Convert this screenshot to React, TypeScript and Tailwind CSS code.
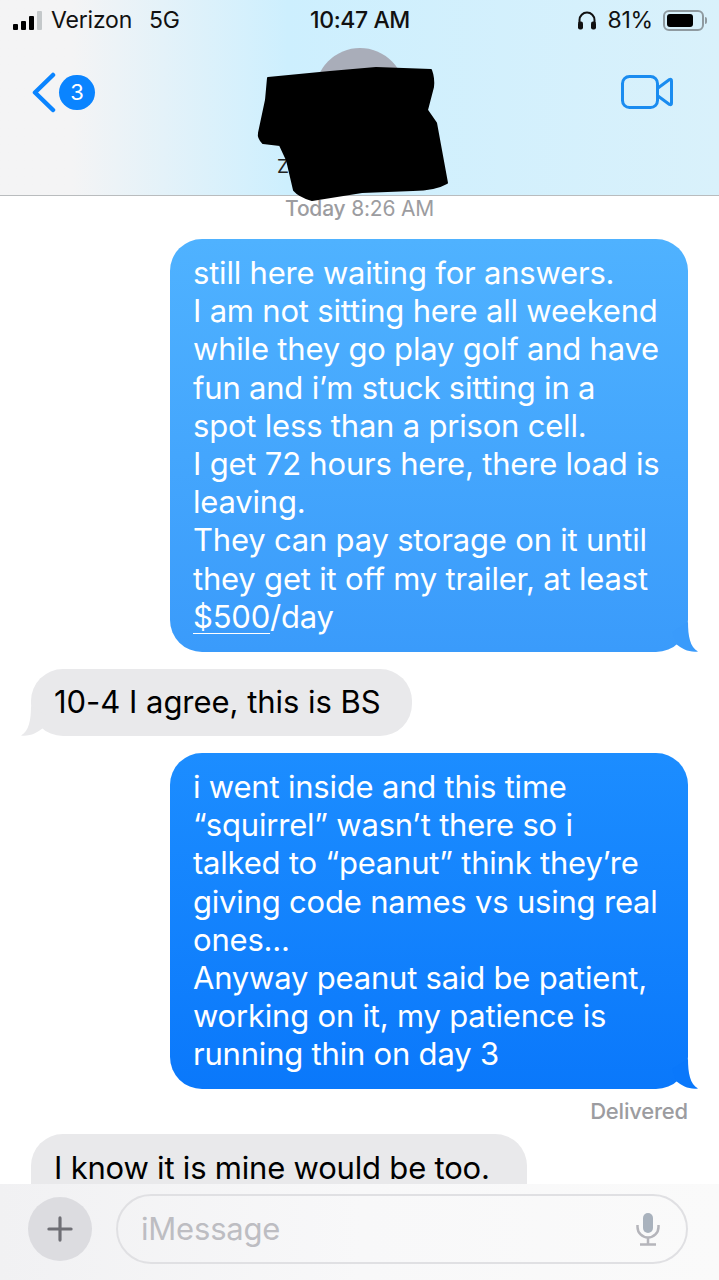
import { Plus } from 'lucide-react'

const firstLines = [
    'still here waiting for answers.',
    'I am not sitting here all weekend',
    'while they go play golf and have',
    'fun and i’m stuck sitting in a',
    'spot less than a prison cell.',
    'I get 72 hours here, there load is',
    'leaving.',
    'They can pay storage on it until',
    'they get it off my trailer, at least',
]

const secondLines = [
    'i went inside and this time',
    '“squirrel” wasn’t there so i',
    'talked to “peanut” think they’re',
    'giving code names vs using real',
    'ones...',
    'Anyway peanut said be patient,',
    'working on it, my patience is',
    'running thin on day 3',
]

/**
 * Bubble tail, drawn for the right side and flipped for received messages
 */
function Tail({ color, className }: { color: string; className: string }) {
    return (
        <svg className={`absolute bottom-0 ${className}`} width="32" height="32" viewBox="0 0 32 32">
            <path d="M20 2 C20 16 22 27 30 31.5 C21 32.5 14 29 8 24 L4 12 Z" fill={color} />
        </svg>
    )
}

function StatusBar() {
    return (
        <div className="flex h-[40px] items-center justify-between pl-[13px] pr-[12px] text-[23px] text-[#111]">
            <div className="flex w-[230px] items-center">
                <div className="flex items-end gap-[3px]">
                    <span className="h-[6px] w-[5px] rounded-[1px] bg-black" />
                    <span className="h-[9px] w-[5px] rounded-[1px] bg-black" />
                    <span className="h-[14px] w-[5px] rounded-[1px] bg-black" />
                    <span className="h-[19px] w-[5px] rounded-[1px] bg-[#c4c8ca]" />
                </div>
                <span className="ml-[9px]">Verizon</span>
                <span className="ml-[17px]">5G</span>
            </div>
            <span className="font-medium tracking-[-0.4px]">10:47 AM</span>
            <div className="flex w-[230px] items-center justify-end">
                <svg width="20" height="20" viewBox="0 0 20 20" fill="#111">
                    <path d="M2.5 13 V10 a7.5 7.5 0 0 1 15 0 V13" fill="none" stroke="#111" strokeWidth="2" />
                    <rect x="1" y="11.5" width="5" height="8" rx="2" />
                    <rect x="14" y="11.5" width="5" height="8" rx="2" />
                </svg>
                <span className="ml-[10px]">81%</span>
                <div className="ml-[10px] flex h-[21px] w-[41px] items-center rounded-[6px] border-2 border-[#8f9aa0] p-[2px]">
                    <div className="h-full w-[80%] rounded-[3px] bg-black" />
                </div>
                <span className="ml-[1px] h-[7px] w-[2px] rounded-r bg-[#8f9aa0]" />
            </div>
        </div>
    )
}

function Header() {
    return (
        <div className="relative z-10 h-[196px] border-b border-[#b9bcbe] bg-gradient-to-r from-[#f4f4f5] from-10% via-[#cdeffe] via-40% to-[#d9f1fb]">
            <StatusBar />
            <div className="flex items-start justify-between pl-[32px] pr-[46px] pt-[32px]">
                <div className="flex items-center">
                    <svg width="24" height="41" viewBox="0 0 24 41" fill="none" stroke="#0a84ff" strokeWidth="4.5" strokeLinecap="round" strokeLinejoin="round">
                        <path d="M21 3 L3 20.5 L21 38" />
                    </svg>
                    <span className="ml-[3px] flex h-[35px] w-[36px] items-center justify-center rounded-full bg-[#0a84ff] text-[22px] text-white">3</span>
                </div>
                <svg className="mt-[3px]" width="52" height="34" viewBox="0 0 52 34" fill="none" stroke="#1a8cf0" strokeWidth="3" strokeLinejoin="round">
                    <rect x="1.5" y="1.5" width="35" height="31" rx="7" />
                    <path d="M37 13 L48.5 4.5 Q50.5 3.5 50.5 6 V28 Q50.5 30.5 48.5 29.5 L37 21" />
                </svg>
            </div>
            <div className="absolute left-[315px] top-[48px] h-[90px] w-[90px] rounded-full bg-[#a9adb9]" />
            <span className="absolute left-[277px] top-[155px] text-[19px] leading-[24px] text-[#222]">Z</span>
            {/* scribbled out contact */}
            <svg className="absolute left-[255px] top-[64px]" width="196" height="140" viewBox="0 0 196 140">
                <path
                    d="M13 14 L75 8 L121 4 L176 6 Q179 14 178 23 L172 46 L181 59 L192 119 Q180 126 158 126 L107 128 L57 136 Q44 132 39 126 L32 96 L25 81 L8 79 Q3 74 4 69 L11 36 Z"
                    fill="#000"
                    stroke="#000"
                    strokeWidth="2"
                    strokeLinejoin="round"
                />
            </svg>
        </div>
    )
}

export default function App() {
    return (
        <div className="relative h-[1280px] w-[719px] overflow-hidden bg-white font-['Inter',sans-serif] tracking-[-0.2px]">
            <Header />
            <div className="relative h-[1084px] overflow-hidden px-[31px] text-[31px] leading-[38.2px]">
                <p className="pt-[1px] text-center text-[21px] leading-[24px] text-[#9c9ca0]">
                    <span className="font-medium">Today</span> 8:26 AM
                </p>

                <div className="relative ml-auto mt-[18px] h-[413px] w-[518px] rounded-[32px] bg-gradient-to-b from-[#4fb2ff] to-[#3a9bfb] px-[23px] py-[15px] text-white">
                    {firstLines.map(line => (
                        <div key={line} className="whitespace-nowrap">{line}</div>
                    ))}
                    <div><span className="underline decoration-1 underline-offset-[5px]">$500</span>/day</div>
                    <Tail color="#3a9bfb" className="-right-[12px]" />
                </div>

                <div className="relative mt-[17px] h-[67px] w-[381px] rounded-[32px] bg-[#e9e9eb] px-[23px] py-[14px] tracking-[-0.03px] text-black">
                    10-4 I agree, this is BS
                    <Tail color="#e9e9eb" className="-left-[12px] -scale-x-100" />
                </div>

                <div className="relative ml-auto mt-[17px] h-[336px] w-[518px] rounded-[32px] bg-gradient-to-b from-[#1c8dff] to-[#0a78fb] px-[23px] py-[15px] text-white">
                    {secondLines.map(line => (
                        <div key={line} className="whitespace-nowrap">{line}</div>
                    ))}
                    <Tail color="#0a78fb" className="-right-[12px]" />
                </div>

                <p className="mt-[10px] text-right text-[22px] font-medium leading-[24px] text-[#9c9ca0]">Delivered</p>

                <div className="mt-[11px] h-[120px] w-[496px] rounded-[32px] bg-[#e9e9eb] px-[23px] py-[15px] text-black">
                    I know it is mine would be too.
                </div>

                <div className="absolute bottom-0 left-0 right-0 flex h-[96px] items-start bg-gradient-to-r from-[#f1f1f3] via-[#f8f8f9] to-[#fafafa] pl-[28px] pr-[31px] pt-[10px]">
                    <div className="mt-[3px] flex h-[64px] w-[64px] items-center justify-center rounded-full bg-[#dcdce0] text-[#6f6f75]">
                        <Plus size={38} strokeWidth={2} />
                    </div>
                    <div className="ml-[24px] flex h-[70px] flex-1 items-center justify-between rounded-[35px] border-2 border-[#e0e0e3] pl-[23px] pr-[26px] text-[#bdbdc2]">
                        <span>iMessage</span>
                        <svg width="24" height="33" viewBox="0 0 24 33" fill="none" stroke="#b5b5bb" strokeWidth="2.5">
                            <rect x="7" y="0" width="10" height="20" rx="5" fill="#a9b2bd" stroke="none" />
                            <path d="M1.5 12 V14 a10.5 10.5 0 0 0 21 0 V12" />
                            <path d="M12 25 V31 M4 31.5 H20" />
                        </svg>
                    </div>
                </div>
            </div>
        </div>
    )
}
